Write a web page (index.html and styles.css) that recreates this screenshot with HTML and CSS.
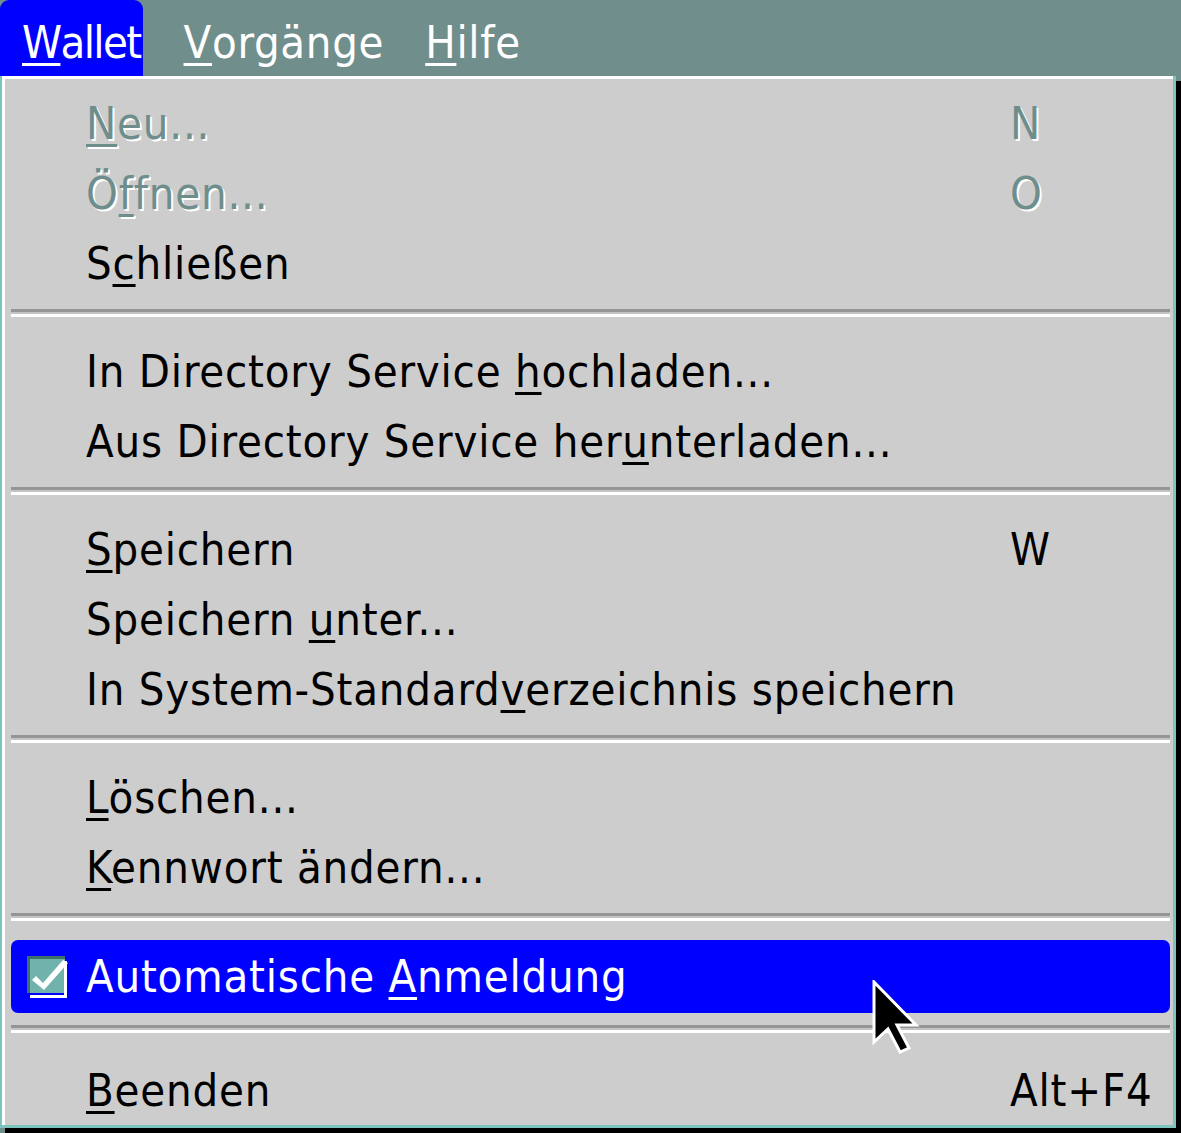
FILE: index.html
```html
<!DOCTYPE html>
<html lang="de">
<head>
<meta charset="utf-8">
<title>Wallet Menü</title>
<link rel="stylesheet" href="styles.css">
</head>
<body>
<div class="screen">
  <div class="menubar">
    <span class="mb-item active"><u>W</u>allet</span>
    <span class="mb-item"><u>V</u>orgänge</span>
    <span class="mb-item"><u>H</u>ilfe</span>
  </div>
  <div class="menu">
    <div class="row disabled"><span class="chk"></span><span class="label"><u>N</u>eu...</span><span class="key">N</span></div>
    <div class="row disabled"><span class="chk"></span><span class="label">Ö<u>f</u>fnen...</span><span class="key">O</span></div>
    <div class="row"><span class="chk"></span><span class="label">S<u>c</u>hließen</span><span class="key"></span></div>
    <div class="sep"></div>
    <div class="row"><span class="chk"></span><span class="label">In Directory Service <u>h</u>ochladen...</span><span class="key"></span></div>
    <div class="row"><span class="chk"></span><span class="label">Aus Directory Service her<u>u</u>nterladen...</span><span class="key"></span></div>
    <div class="sep"></div>
    <div class="row"><span class="chk"></span><span class="label"><u>S</u>peichern</span><span class="key">W</span></div>
    <div class="row"><span class="chk"></span><span class="label">Speichern <u>u</u>nter...</span><span class="key"></span></div>
    <div class="row"><span class="chk"></span><span class="label">In System-Standard<u>v</u>erzeichnis speichern</span><span class="key"></span></div>
    <div class="sep"></div>
    <div class="row"><span class="chk"></span><span class="label"><u>L</u>öschen...</span><span class="key"></span></div>
    <div class="row"><span class="chk"></span><span class="label"><u>K</u>ennwort ändern...</span><span class="key"></span></div>
    <div class="sep"></div>
    <div class="row selected">
      <span class="chk">
        <svg class="checkbox" width="46" height="46" viewBox="0 0 46 46">
          <rect x="0" y="0" width="38" height="37" fill="#6fb3ac"/>
          <path d="M0 0 H38 V3 H3 V37 H0 Z" fill="#3d6f6b"/>
          <path d="M40 5 V42 H3 V39 H37 V5 Z" fill="#ffffff"/>
          <path d="M9 20 L16 27 L36 4 L41 7 L17 34 L5 24 Z" fill="#ffffff"/>
        </svg>
      </span>
      <span class="label">Automatische <u>A</u>nmeldung</span><span class="key"></span>
    </div>
    <div class="sep last"></div>
    <div class="row"><span class="chk"></span><span class="label"><u>B</u>eenden</span><span class="key">Alt+F4</span></div>
  </div>
  <svg class="cursor" width="50" height="80" viewBox="0 0 50 80">
    <path d="M3 2 L3 62 L17 49 L29 72 L38 68 L26 45 L45 45 Z" fill="#000" stroke="#fff" stroke-width="3" stroke-linejoin="miter"/>
  </svg>
</div>
</body>
</html>
```
FILE: styles.css
```css
html, body {
  margin: 0;
  padding: 0;
  background: #708e8b;
}

.screen {
  position: relative;
  width: 1181px;
  height: 1133px;
  overflow: hidden;
  background: #708e8b;
  font-family: "DejaVu Sans Condensed", "DejaVu Sans", sans-serif;
  font-stretch: condensed;
  font-size: 45px;
}

u {
  text-decoration: underline;
  text-decoration-thickness: 3px;
  text-underline-offset: 5px;
}

.menubar {
  height: 76px;
  display: flex;
  align-items: stretch;
  gap: 41px;
  color: #ffffff;
}

.mb-item {
  display: flex;
  align-items: center;
  padding-top: 8px;
  box-sizing: border-box;
  letter-spacing: 0.7px;
}

.mb-item.active {
  background: #0000ff;
  padding-left: 22px;
  padding-right: 2px;
  border-radius: 9px 9px 0 0;
  letter-spacing: -1.6px;
}

.menu {
  width: 1176px;
  box-sizing: border-box;
  background: #cdcdcd;
  border-left: 2px solid #7ec4be;
  border-right: 3px solid #7ec4be;
  border-bottom: 3px solid #7ec4be;
  padding: 12px 0 0 3px;
  box-shadow: inset 3px 3px 0 #ffffff, 5px 5px 0 #000000;
  color: #000000;
}

.row {
  display: grid;
  grid-template-columns: 81px 1fr 163px;
  align-items: center;
  height: 70px;
  white-space: nowrap;
  letter-spacing: 0.8px;
}

.row .chk {
  display: flex;
  align-items: center;
  padding-left: 22px;
}

.row.disabled {
  color: #6f8e8b;
  text-shadow: 2px 2px 0 #ffffff;
}

.row.selected {
  height: 73px;
  margin: 0 3px 0 6px;
  background: #0000ff;
  border-radius: 7px;
  color: #ffffff;
  grid-template-columns: 75px 1fr 160px;
}

.row.selected .chk {
  padding-left: 16px;
  padding-top: 4px;
}

.sep {
  height: 38px;
  box-sizing: border-box;
  padding-top: 11px;
  margin: 0 3px 0 6px;
}

.sep::before {
  content: "";
  display: block;
  height: 3px;
  background: #959595;
  border-bottom: 2px solid #c4c4c4;
}

.sep::after {
  content: "";
  display: block;
  height: 3px;
  background: #ffffff;
}

.sep.last {
  height: 42px;
  padding-top: 12px;
}

.cursor {
  position: absolute;
  left: 871px;
  top: 980px;
}
```
